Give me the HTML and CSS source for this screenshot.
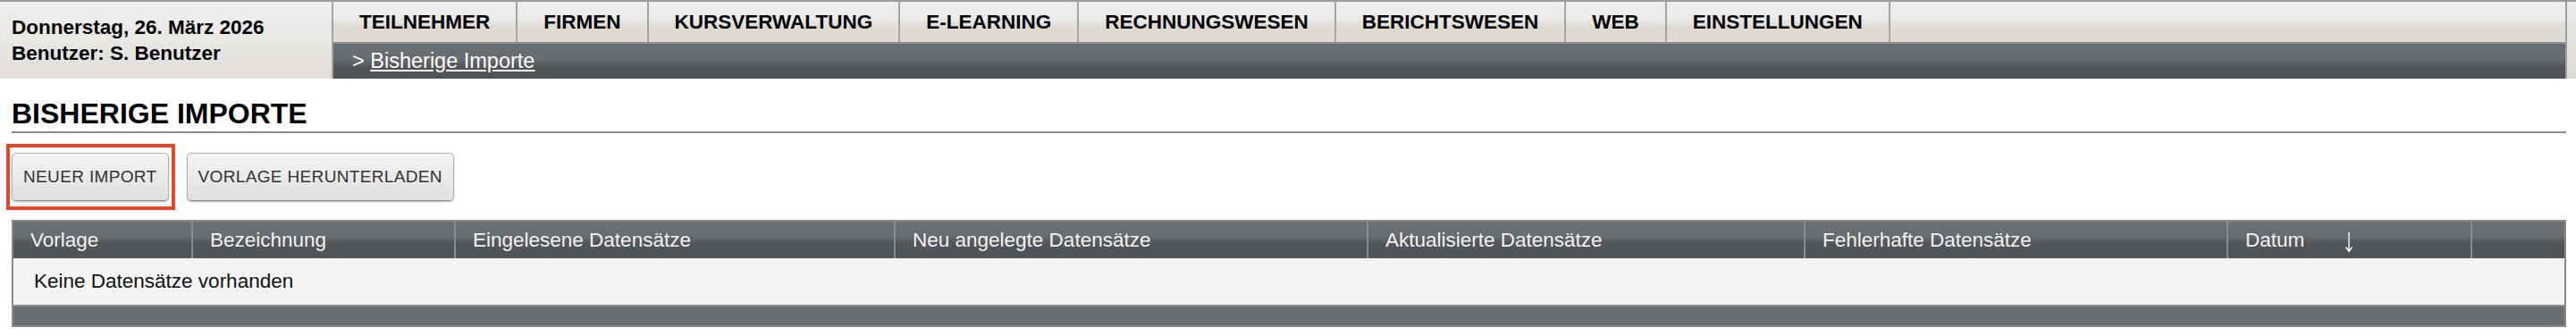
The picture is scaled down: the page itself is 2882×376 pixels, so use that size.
FILE: index.html
```html
<!DOCTYPE html>
<html lang="de">
<head>
<meta charset="utf-8">
<title>Bisherige Importe</title>
<link rel="stylesheet" href="styles.css">
</head>
<body>
<header class="top">
  <div class="userbox">
    <div>Donnerstag, 26. März 2026</div>
    <div>Benutzer: S. Benutzer</div>
  </div>
  <div class="nav">
    <ul class="menu">
      <li>TEILNEHMER</li>
      <li>FIRMEN</li>
      <li>KURSVERWALTUNG</li>
      <li>E-LEARNING</li>
      <li>RECHNUNGSWESEN</li>
      <li>BERICHTSWESEN</li>
      <li>WEB</li>
      <li>EINSTELLUNGEN</li>
    </ul>
    <div class="crumb">&gt; <a href="#">Bisherige Importe</a></div>
  </div>
  <div class="edge"></div>
</header>
<main class="content">
  <h1 class="title">BISHERIGE IMPORTE</h1>
  <div class="actions">
    <span class="highlight"><button class="btn" type="button">NEUER IMPORT</button></span>
    <button class="btn" type="button">VORLAGE HERUNTERLADEN</button>
  </div>
  <div class="grid">
    <div class="th">Vorlage</div>
    <div class="th">Bezeichnung</div>
    <div class="th">Eingelesene Datensätze</div>
    <div class="th">Neu angelegte Datensätze</div>
    <div class="th">Aktualisierte Datensätze</div>
    <div class="th">Fehlerhafte Datensätze</div>
    <div class="th">Datum<svg class="sort" width="12" height="24" viewBox="0 0 12 24"><path d="M6 1V22M2.5 17.5L6 22.5L9.5 17.5" fill="none" stroke="#f0f0f0" stroke-width="1.5"/></svg></div>
    <div class="th th-end"></div>
    <div class="empty">Keine Datensätze vorhanden</div>
    <div class="foot"></div>
  </div>
</main>
</body>
</html>
```

FILE: styles.css
```css
* { box-sizing: border-box; }

body {
  margin: 0;
  font-family: "Liberation Sans", Arial, sans-serif;
  background: #ffffff;
  color: #000000;
}

.top {
  display: flex;
  height: 88px;
  border-top: 2px solid #9b9b9b;
}

.userbox {
  flex: none;
  width: 373px;
  display: flex;
  flex-direction: column;
  justify-content: center;
  padding: 0 0 0 13px;
  font-weight: bold;
  font-size: 22.5px;
  line-height: 29px;
  background: linear-gradient(#f0f0f0, #e1ded9);
  border-right: 2px solid #a2a2a2;
  white-space: nowrap;
}

.nav {
  flex: 1;
  min-width: 0;
  display: flex;
  flex-direction: column;
}

.menu {
  display: flex;
  margin: 0;
  padding: 0;
  list-style: none;
  height: 47px;
  border-bottom: 2px solid #8f8f8f;
  background: linear-gradient(#eeeeee 0%, #ececec 40%, #dedbd5 62%, #dedbd5 100%);
}

.menu li {
  padding: 1px 29px 0;
  line-height: 44px;
  font-weight: bold;
  font-size: 22.5px;
  border-right: 2px solid #a4a4a4;
  white-space: nowrap;
}

.crumb {
  flex: 1;
  padding-left: 21px;
  line-height: 39px;
  font-size: 23.5px;
  color: #ffffff;
  background: linear-gradient(#686e71 0%, #666c6f 45%, #505457 68%, #4f5356 100%);
}

.crumb a {
  color: #ffffff;
  text-decoration: underline;
}

.edge {
  flex: none;
  width: 12px;
  border-left: 2px solid #9f9f9f;
  background: linear-gradient(#ebebeb, #dcdad6);
}

.content {
  padding: 0 11px 0 13px;
}

.title {
  margin: 19px 0 0;
  font-size: 32px;
  line-height: 40px;
  font-weight: bold;
  border-bottom: 2px solid #8c8c8c;
}

.actions {
  display: flex;
  gap: 20px;
  margin-top: 22px;
}

.highlight {
  position: relative;
  display: flex;
}

.highlight::after {
  content: "";
  position: absolute;
  top: -10px;
  bottom: -10px;
  left: -6px;
  right: -7px;
  border: 4px solid #e8432b;
  pointer-events: none;
}

.btn {
  height: 54px;
  padding: 0 12px;
  font-family: "Liberation Sans", Arial, sans-serif;
  font-size: 19px;
  letter-spacing: 0.35px;
  color: #333333;
  background: linear-gradient(#f3f3f3, #e0e0e0);
  border: 1px solid #b3b3b3;
  border-bottom-color: #8e8e8e;
  border-radius: 5px;
  box-shadow: 0 1px 2px rgba(0, 0, 0, 0.3);
}

.grid {
  margin-top: 21px;
  display: grid;
  grid-template-columns: 201px 294px 492px 529px 489px 473px 273px 1fr;
  border: 2px solid #8a8a8a;
}

.th {
  display: flex;
  align-items: center;
  height: 41px;
  line-height: 41px;
  padding-left: 19px;
  font-size: 22.5px;
  color: #f2f2f2;
  background: linear-gradient(#6b7174 0%, #666c6f 40%, #52565a 58%, #4f5357 100%);
  border-right: 2px solid #8b8b8b;
  white-space: nowrap;
}

.th-end {
  border-right: 0;
}

.sort {
  margin: 5px 0 0 44px;
}

.empty {
  grid-column: 1 / -1;
  height: 52px;
  line-height: 52px;
  padding-left: 23px;
  font-size: 22.5px;
  color: #111111;
  background: #f4f4f4;
}

.foot {
  grid-column: 1 / -1;
  height: 23px;
  border-top: 2px solid #8e8e8e;
  background: #686e71;
}
```
